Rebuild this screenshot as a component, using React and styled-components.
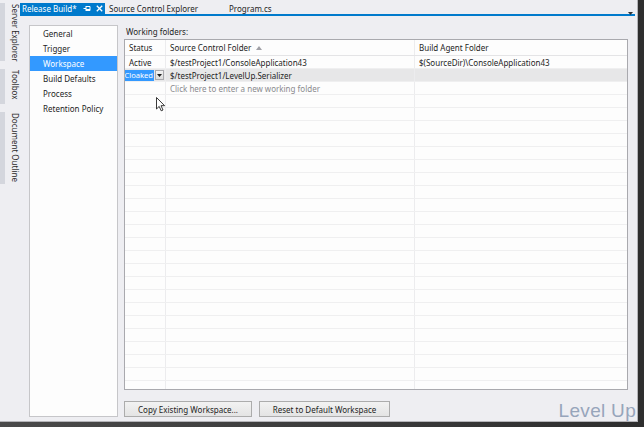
import React from "react";
import styled, { createGlobalStyle } from "styled-components";

const Global = createGlobalStyle`
  html, body { margin: 0; padding: 0; background: #3a3a3a; }
  * { box-sizing: border-box; }
`;

const FONT = `"Noto Sans", "Open Sans", sans-serif`;

const Frame = styled.div`
  width: 644px;
  height: 427px;
  background: linear-gradient(90deg, #4a4a4a, #2e2e2e);
  position: relative;
  overflow: hidden;
`;

const Window = styled.div`
  position: relative;
  width: 638px;
  height: 422px;
  background: #eeeef2;
  border-right: 1px solid #b4b4b8;
  border-bottom: 1px solid #b4b4b8;
  display: flex;
  font-family: ${FONT};
  font-size: 8px;
  color: #1e1e1e;
`;

const SideStrip = styled.div`
  width: 20px;
  display: flex;
  flex-direction: column;
  gap: 8px;
  padding-top: 3px;
`;

const SideTab = styled.div`
  writing-mode: vertical-rl;
  border-left: 5px solid #d4d6dd;
  padding: 1px 0 2px 2px;
  font-size: 8px;
  line-height: 10px;
  color: #2a2a2a;
  white-space: nowrap;
`;

const Main = styled.div`
  flex: 1;
  display: flex;
  flex-direction: column;
  min-width: 0;
`;

const TabBar = styled.div`
  margin-top: 3px;
  height: 11px;
  display: flex;
  align-items: stretch;
  position: relative;
`;

const Tab = styled.div`
  display: flex;
  align-items: center;
  gap: 6px;
  padding: 0 ${(p) => (p.$active ? 4 : 3)}px 0 2px;
  width: ${(p) => p.$w}px;
  background: ${(p) => (p.$active ? "#007acc" : "transparent")};
  color: ${(p) => (p.$active ? "#ffffff" : "#1e1e1e")};
  white-space: nowrap;
  line-height: 11px;
`;

const TabIcons = styled.span`
  display: flex;
  align-items: center;
  gap: 5px;
  margin-left: auto;
`;

const TabMenu = styled.div`
  position: absolute;
  right: 4px;
  top: 3px;
`;

const TabLine = styled.div`
  height: 2px;
  background: #007acc;
  margin-right: 2px;
`;

const Body = styled.div`
  flex: 1;
  display: flex;
  gap: 6px;
  padding: 9px 9px 4px 9px;
  min-height: 0;
`;

const Nav = styled.div`
  width: 89px;
  background: #fdfdfd;
  border: 1px solid #c6c6c9;
  display: flex;
  flex-direction: column;
`;

const NavItem = styled.div`
  height: 15px;
  line-height: 15px;
  padding-left: 13px;
  background: ${(p) => (p.$selected ? "#3399ff" : "transparent")};
  color: ${(p) => (p.$selected ? "#ffffff" : "#1e1e1e")};
  white-space: nowrap;
`;

const Right = styled.div`
  flex: 1;
  display: flex;
  flex-direction: column;
  min-width: 0;
`;

const Label = styled.div`
  height: 13px;
  line-height: 13px;
  padding-left: 2px;
  margin-bottom: 1px;
`;

const Grid = styled.div`
  flex: 1;
  background: #fdfdfd;
  border: 1px solid #a9a9ae;
  overflow: hidden;
  display: flex;
  flex-direction: column;
`;

const Row = styled.div`
  display: grid;
  grid-template-columns: 41px 249px 1fr;
  height: ${(p) => (p.$header ? 16 : 13)}px;
  flex: none;
  border-bottom: 1px solid ${(p) => (p.$header ? "#e4e4e6" : "#efeff0")};
  background: ${(p) => (p.$shaded ? "#e7e7e8" : "transparent")};
`;

const Cell = styled.div`
  border-right: ${(p) => (p.$last ? "none" : "1px solid #ececee")};
  padding-left: 4px;
  display: flex;
  align-items: center;
  white-space: nowrap;
  overflow: hidden;
  color: ${(p) => (p.$muted ? "#8a8a8e" : "#1e1e1e")};
`;

const SortMark = styled.span`
  margin-left: 5px;
  display: flex;
`;

const ComboCell = styled.div`
  border-right: 1px solid #ececee;
  display: flex;
  align-items: center;
  padding-right: 1px;
`;

const Selected = styled.div`
  width: 29px;
  height: 11px;
  background: #3399ff;
  color: #fff;
  display: flex;
  justify-content: flex-end;
  line-height: 11px;
  white-space: nowrap;
  font-size: 7.6px;
  padding-right: 1px;
`;

const ComboButton = styled.div`
  width: 10px;
  height: 10px;
  margin-left: 1px;
  border: 1px solid #a9a9ae;
  background: linear-gradient(#f4f4f4, #dcdcdc);
  display: flex;
  align-items: center;
  justify-content: center;
`;

const Buttons = styled.div`
  display: flex;
  gap: 7px;
  margin-top: 11px;
  height: 16px;
`;

const Button = styled.div`
  width: ${(p) => p.$w}px;
  border: 1px solid #acacac;
  background: linear-gradient(#f2f2f2, #e4e4e4);
  display: flex;
  align-items: center;
  justify-content: center;
  white-space: nowrap;
`;

const Watermark = styled.div`
  position: absolute;
  right: 1px;
  bottom: -1px;
  font-family: "Liberation Sans", Arial, sans-serif;
  font-size: 19px;
  font-weight: 300;
  color: #97a5bb;
  letter-spacing: 0.3px;
`;

const Cursor = styled.svg`
  position: absolute;
  left: 156px;
  top: 97px;
`;

const Pin = () => (
  <svg width="8" height="7" viewBox="0 0 8 7">
    <path d="M0.5 3.5H3M3 1V6M3 1.5H7V5.5H3M3 4.5H7" fill="none" stroke="#fff" strokeWidth="1" />
  </svg>
);

const Close = () => (
  <svg width="7" height="7" viewBox="0 0 7 7">
    <path d="M0.8 0.8L6.2 6.2M6.2 0.8L0.8 6.2" stroke="#fff" strokeWidth="1.3" />
  </svg>
);

const Down = ({ color = "#1e1e1e" }) => (
  <svg width="5" height="3" viewBox="0 0 5 3">
    <path d="M0 0H5L2.5 3Z" fill={color} />
  </svg>
);

const Up = () => (
  <svg width="6" height="4" viewBox="0 0 6 4">
    <path d="M0 4H6L3 0Z" fill="#a0a0a6" />
  </svg>
);

const navItems = ["General", "Trigger", "Workspace", "Build Defaults", "Process", "Retention Policy"];

export default function App() {
  const empty = Array.from({ length: 24 });
  return (
    <Frame>
      <Global />
      <Window>
        <SideStrip>
          <SideTab style={{ height: 58 }}>Server Explorer</SideTab>
          <SideTab style={{ height: 35 }}>Toolbox</SideTab>
          <SideTab style={{ height: 72 }}>Document Outline</SideTab>
        </SideStrip>
        <Main>
          <TabBar>
            <Tab $active $w={85}>
              Release Build*
              <TabIcons>
                <Pin />
                <Close />
              </TabIcons>
            </Tab>
            <Tab $w={122} style={{ paddingLeft: 4 }}>Source Control Explorer</Tab>
            <Tab $w={60}>Program.cs</Tab>
            <TabMenu>
              <Down color="#333" />
            </TabMenu>
          </TabBar>
          <TabLine />
          <Body>
            <Nav>
              {navItems.map((n) => (
                <NavItem key={n} $selected={n === "Workspace"}>
                  {n}
                </NavItem>
              ))}
            </Nav>
            <Right>
              <Label>Working folders:</Label>
              <Grid>
                <Row $header>
                  <Cell>Status</Cell>
                  <Cell>
                    Source Control Folder
                    <SortMark>
                      <Up />
                    </SortMark>
                  </Cell>
                  <Cell $last>Build Agent Folder</Cell>
                </Row>
                <Row>
                  <Cell>Active</Cell>
                  <Cell>$/testProject1/ConsoleApplication43</Cell>
                  <Cell $last>$(SourceDir)\ConsoleApplication43</Cell>
                </Row>
                <Row $shaded>
                  <ComboCell>
                    <Selected>Cloaked</Selected>
                    <ComboButton>
                      <Down />
                    </ComboButton>
                  </ComboCell>
                  <Cell>$/testProject1/LevelUp.Serializer</Cell>
                  <Cell $last />
                </Row>
                <Row>
                  <Cell />
                  <Cell $muted>Click here to enter a new working folder</Cell>
                  <Cell $last />
                </Row>
                {empty.map((_, i) => (
                  <Row key={i}>
                    <Cell />
                    <Cell />
                    <Cell $last />
                  </Row>
                ))}
              </Grid>
              <Buttons>
                <Button $w={128}>Copy Existing Workspace...</Button>
                <Button $w={131}>Reset to Default Workspace</Button>
              </Buttons>
            </Right>
          </Body>
        </Main>
        <Cursor width="10" height="15" viewBox="0 0 10 15">
          <path d="M0.5 0.5V12L3.2 9.4L5.2 13.8L7 13L5 8.7H8.6Z" fill="#fff" stroke="#222" strokeWidth="0.9" strokeLinejoin="round" />
        </Cursor>
        <Watermark>Level Up</Watermark>
      </Window>
    </Frame>
  );
}
